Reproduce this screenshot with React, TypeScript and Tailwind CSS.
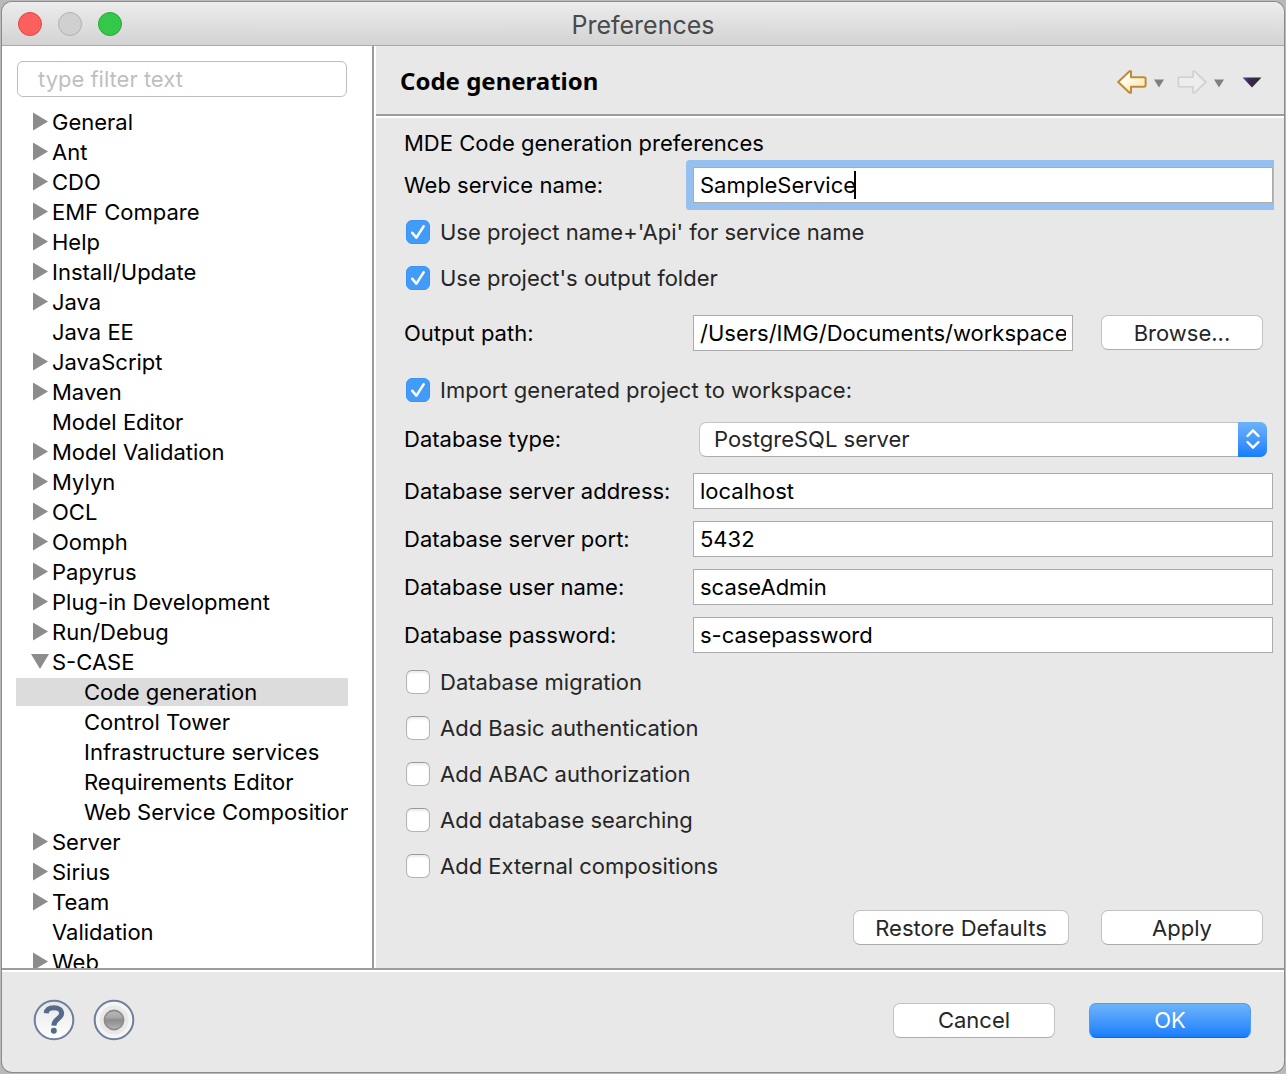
import React, { useState } from "react";

type TreeNode = { label: string; state: "closed" | "open" | "leaf"; children?: string[] };

const tree: TreeNode[] = [
  { label: "General", state: "closed" },
  { label: "Ant", state: "closed" },
  { label: "CDO", state: "closed" },
  { label: "EMF Compare", state: "closed" },
  { label: "Help", state: "closed" },
  { label: "Install/Update", state: "closed" },
  { label: "Java", state: "closed" },
  { label: "Java EE", state: "leaf" },
  { label: "JavaScript", state: "closed" },
  { label: "Maven", state: "closed" },
  { label: "Model Editor", state: "leaf" },
  { label: "Model Validation", state: "closed" },
  { label: "Mylyn", state: "closed" },
  { label: "OCL", state: "closed" },
  { label: "Oomph", state: "closed" },
  { label: "Papyrus", state: "closed" },
  { label: "Plug-in Development", state: "closed" },
  { label: "Run/Debug", state: "closed" },
  {
    label: "S-CASE",
    state: "open",
    children: [
      "Code generation",
      "Control Tower",
      "Infrastructure services",
      "Requirements Editor",
      "Web Service Composition",
    ],
  },
  { label: "Server", state: "closed" },
  { label: "Sirius", state: "closed" },
  { label: "Team", state: "closed" },
  { label: "Validation", state: "leaf" },
  { label: "Web", state: "closed" },
];

function Disclosure({ state }: { state: TreeNode["state"] }) {
  return (
    <svg className="h-[30px] w-5 shrink-0" viewBox="0 0 20 30" fill="#8c8c8c" aria-hidden="true">
      {state === "closed" && <path d="M3 5.5 L18 14.5 L3 23.5 Z" />}
      {state === "open" && <path d="M1 7 H19 L10 22 Z" />}
    </svg>
  );
}

function Tree() {
  const [selected, setSelected] = useState("Code generation");
  return (
    <ul className="min-h-0 flex-1 overflow-hidden whitespace-nowrap leading-[30px] text-black">
      {tree.map((node) => (
        <li key={node.label}>
          <button type="button" className="flex h-[30px] w-full items-center gap-[2px] pl-[14px] text-left">
            <Disclosure state={node.state} />
            {node.label}
          </button>
          {node.children && (
            <ul>
              {node.children.map((child) => (
                <li key={child} className="py-px">
                  <button
                    type="button"
                    onClick={() => setSelected(child)}
                    className={
                      child === selected
                        ? "block h-7 w-full overflow-hidden bg-[#dcdcdc] pl-[68px] text-left leading-7"
                        : "block h-7 w-full overflow-hidden pl-[68px] text-left leading-7"
                    }
                  >
                    {child}
                  </button>
                </li>
              ))}
            </ul>
          )}
        </li>
      ))}
    </ul>
  );
}

function Check({ id, label, checked = false }: { id: string; label: string; checked?: boolean }) {
  return (
    <div className="flex h-[46px] items-center gap-[10px] pl-[2px]">
      <span className="relative h-6 w-6 shrink-0">
        <input
          id={id}
          type="checkbox"
          defaultChecked={checked}
          className="peer block h-6 w-6 appearance-none rounded-[6px] border border-[#b4b4b4] border-t-[#9a9a9a] bg-white shadow-[inset_0_2px_2px_#ececec] checked:border-[#3b93f5] checked:bg-[#419bf9] checked:shadow-none"
        />
        <svg
          className="pointer-events-none absolute inset-0 hidden h-6 w-6 peer-checked:block"
          viewBox="0 0 24 24"
          fill="none"
          stroke="#fff"
          strokeWidth="2.6"
          strokeLinecap="round"
          strokeLinejoin="round"
          aria-hidden="true"
        >
          <path d="M6.3 12.8 L10.4 17.6 L17.6 6.4" />
        </svg>
      </span>
      <label htmlFor={id} className="text-[#262626]">
        {label}
      </label>
    </div>
  );
}

function Field({ id, label, value }: { id: string; label: string; value: string }) {
  return (
    <div className="flex items-center pr-px">
      <label htmlFor={id} className="w-[289px] shrink-0">
        {label}
      </label>
      <input
        id={id}
        type="text"
        defaultValue={value}
        className="h-9 min-w-0 flex-1 border border-[#ababab] bg-white px-[6px] outline-none"
      />
    </div>
  );
}

function PushButton({ label, wide = false }: { label: string; wide?: boolean }) {
  return (
    <button
      type="button"
      className={
        wide
          ? "h-[35px] w-[216px] shrink-0 rounded-[7px] border border-[#c3c3c3] border-b-[#adadad] bg-white text-[#262626]"
          : "h-[35px] w-[162px] shrink-0 rounded-[7px] border border-[#c3c3c3] border-b-[#adadad] bg-white text-[#262626]"
      }
    >
      {label}
    </button>
  );
}

function MenuTriangle() {
  return (
    <svg className="h-[9px] w-[10px]" viewBox="0 0 10 9" fill="#808080" aria-hidden="true">
      <path d="M0 0.5 H10 L5 8.5 Z" />
    </svg>
  );
}

function Toolbar() {
  return (
    <div className="flex items-center pt-[2px]">
      <button type="button" aria-label="Back">
        <svg className="h-6 w-[30px]" viewBox="0 0 30 24" aria-hidden="true">
          <defs>
            <linearGradient id="back" x1="0" y1="0" x2="1" y2="1">
              <stop offset="0.3" stopColor="#fffdf0" />
              <stop offset="1" stopColor="#fbe3a0" />
            </linearGradient>
          </defs>
          <path
            d="M1.2 12 L12.5 1.2 H14 V7.2 H27 Q28.6 7.2 28.6 9 V15 Q28.6 16.8 27 16.8 H14 V22.8 H12.5 Z"
            fill="url(#back)"
            stroke="#c08a35"
            strokeWidth="2"
            strokeLinejoin="round"
          />
        </svg>
      </button>
      <button type="button" aria-label="Back history" className="ml-[7px] pt-[2px]">
        <MenuTriangle />
      </button>
      <button type="button" aria-label="Forward" className="ml-[13px]">
        <svg className="h-6 w-[30px]" viewBox="0 0 30 24" aria-hidden="true">
          <path
            d="M28.8 12 L17.5 1.2 H16 V7.2 H2.5 Q1.4 7.2 1.4 8.5 V15.5 Q1.4 16.8 2.5 16.8 H16 V22.8 H17.5 Z"
            fill="#ededed"
            stroke="#d2d2d2"
            strokeWidth="1.8"
            strokeLinejoin="round"
          />
        </svg>
      </button>
      <button type="button" aria-label="Forward history" className="ml-[7px] pt-[2px]">
        <MenuTriangle />
      </button>
      <button type="button" aria-label="View menu" className="ml-[18px]">
        <svg className="h-[11px] w-5" viewBox="0 0 20 11" aria-hidden="true">
          <defs>
            <linearGradient id="view" x1="0" y1="0" x2="1" y2="0">
              <stop offset="0" stopColor="#6a3fc4" />
              <stop offset="0.35" stopColor="#3a2850" />
              <stop offset="1" stopColor="#2b2b2b" />
            </linearGradient>
          </defs>
          <path d="M0.5 0.5 H19.5 L10 10.5 Z" fill="url(#view)" />
        </svg>
      </button>
    </div>
  );
}

function Header() {
  return (
    <header className="flex h-[72px] shrink-0 items-center justify-between border-b-2 border-white pr-[22px] shadow-[inset_0_-2px_0_#9c9c9c]">
      <h1 className="pl-6 font-['Noto_Sans'] text-[24px] font-bold leading-8 text-black">Code generation</h1>
      <Toolbar />
    </header>
  );
}

function Settings() {
  return (
    <form className="mr-[10px] flex flex-col overflow-hidden pl-7" onSubmit={(e) => e.preventDefault()}>
      <p className="flex h-[49px] items-center">MDE Code generation preferences</p>

      <div className="flex items-center pr-px">
        <label htmlFor="service" className="w-[289px] shrink-0">
          Web service name:
        </label>
        <div className="relative flex min-w-0 flex-1 rounded-[1px] shadow-[0_0_0_7px_#96c0f0]">
          <input
            id="service"
            type="text"
            defaultValue="SampleService"
            className="h-9 min-w-0 flex-1 border border-[#ababab] bg-white px-[6px] caret-transparent outline-none"
          />
          <span className="absolute left-[161px] top-1 h-7 w-[2px] bg-black" />
        </div>
      </div>

      <div className="pb-[14px] pt-[6px]">
        <Check id="api" label="Use project name+'Api' for service name" checked />
        <Check id="folder" label="Use project's output folder" checked />
      </div>

      <div className="flex items-start pr-[11px]">
        <label htmlFor="path" className="w-[289px] shrink-0 leading-9">
          Output path:
        </label>
        <input
          id="path"
          type="text"
          defaultValue="/Users/IMG/Documents/workspace"
          className="mr-7 h-9 min-w-0 flex-1 border border-[#ababab] bg-white px-[6px] outline-none"
        />
        <PushButton label="Browse..." />
      </div>

      <div className="pb-2 pt-4">
        <Check id="import" label="Import generated project to workspace:" checked />
      </div>

      <div className="flex items-center pr-[7px]">
        <label htmlFor="dbtype" className="w-[295px] shrink-0 leading-9">
          Database type:
        </label>
        <div className="relative min-w-0 flex-1">
          <select
            id="dbtype"
            className="block h-[35px] w-full appearance-none rounded-[7px] border border-[#c3c3c3] border-b-[#adadad] bg-white px-[14px] text-[#262626] outline-none"
          >
            <option>PostgreSQL server</option>
          </select>
          <span className="pointer-events-none absolute inset-y-0 right-0 flex w-[29px] items-center justify-center rounded-r-[7px] bg-linear-to-b from-[#6cb3fa] to-[#157dfb]">
            <svg
              className="h-[22px] w-4"
              viewBox="0 0 16 22"
              fill="none"
              stroke="#fff"
              strokeWidth="2.4"
              strokeLinecap="round"
              strokeLinejoin="round"
              aria-hidden="true"
            >
              <path d="M2.5 8 L8 2.3 L13.5 8 M2.5 14 L8 19.7 L13.5 14" />
            </svg>
          </span>
        </div>
      </div>

      <div className="flex flex-col gap-3 pb-[6px] pt-4">
        <Field id="address" label="Database server address:" value="localhost" />
        <Field id="port" label="Database server port:" value="5432" />
        <Field id="user" label="Database user name:" value="scaseAdmin" />
        <Field id="password" label="Database password:" value="s-casepassword" />
      </div>

      <Check id="migration" label="Database migration" />
      <Check id="basic" label="Add Basic authentication" />
      <Check id="abac" label="Add ABAC authorization" />
      <Check id="search" label="Add database searching" />
      <Check id="external" label="Add External compositions" />

      <div className="flex justify-end gap-8 pr-[11px] pt-[21px]">
        <PushButton label="Restore Defaults" wide />
        <PushButton label="Apply" />
      </div>
    </form>
  );
}

function HelpIcon() {
  return (
    <svg className="h-[42px] w-[42px]" viewBox="0 0 42 42" aria-hidden="true">
      <defs>
        <linearGradient id="disc" x1="0" y1="0" x2="0" y2="1">
          <stop offset="0" stopColor="#e6e6e8" />
          <stop offset="1" stopColor="#ffffff" />
        </linearGradient>
      </defs>
      <circle cx="21" cy="21" r="19.3" fill="url(#disc)" stroke="#6e7f9b" strokeWidth="2" />
      <path
        d="M13.2 14.2 C13.6 10.2 17.3 8.8 21 8.8 C25.5 8.8 28.6 11 28.6 14.6 C28.6 19.6 21 19.4 20.8 26.6"
        fill="none"
        stroke="#566b8c"
        strokeWidth="5"
      />
      <circle cx="20.8" cy="31.8" r="3" fill="#566b8c" />
    </svg>
  );
}

function RecordIcon() {
  return (
    <svg className="h-[42px] w-[42px]" viewBox="0 0 42 42" aria-hidden="true">
      <defs>
        <linearGradient id="record" x1="0" y1="0" x2="0" y2="1">
          <stop offset="0" stopColor="#b8b8b8" />
          <stop offset="0.35" stopColor="#aaaaaa" />
          <stop offset="0.5" stopColor="#8c8c8c" />
          <stop offset="1" stopColor="#b4b4b4" />
        </linearGradient>
      </defs>
      <circle cx="21" cy="21" r="19.3" fill="#f4f4f4" stroke="#6e7f9b" strokeWidth="2" />
      <circle cx="21" cy="21" r="14.5" fill="#e8e8e8" />
      <circle cx="21" cy="21" r="9.6" fill="url(#record)" stroke="#8a8a8a" strokeWidth="1.6" />
    </svg>
  );
}

export default function App() {
  return (
    <div className="h-screen bg-[#b9b9b9] p-[2px] font-['Inter',sans-serif] text-[22px] leading-7 text-black">
      <div className="flex h-full flex-col overflow-hidden rounded-[10px] bg-[#e8e8e8] shadow-[0_0_0_1px_#8c8c8c]">
        <div className="grid h-11 shrink-0 grid-cols-[1fr_auto_1fr] items-center border-b border-[#a9a9a9] bg-linear-to-b from-[#ececec] to-[#d3d3d3] px-4 pt-px">
          <div className="flex gap-4">
            <button type="button" aria-label="Close" className="h-6 w-6 rounded-full border border-[#e2453f] bg-[#fc605c]" />
            <button type="button" aria-label="Minimize" className="h-6 w-6 rounded-full border border-[#b0b0b0] bg-[#d0d0d0]" />
            <button type="button" aria-label="Zoom" className="h-6 w-6 rounded-full border border-[#26a934] bg-[#34c84a]" />
          </div>
          <div className="pt-[2px] text-[25px] leading-8 text-[#4a4a4a]">Preferences</div>
        </div>

        <div className="flex min-h-0 flex-1">
          <aside className="flex w-[372px] shrink-0 flex-col border-r-2 border-[#9c9c9c] bg-white pl-[14px] pr-6">
            <input
              type="text"
              aria-label="Filter"
              placeholder="type filter text"
              className="mx-px mb-[10px] mt-[15px] h-9 shrink-0 rounded-[6px] border border-[#bdbdbd] bg-white px-5 outline-none placeholder:text-[#bfbfbf]"
            />
            <Tree />
          </aside>
          <main className="flex min-w-0 flex-1 flex-col border-l-2 border-white">
            <Header />
            <Settings />
          </main>
        </div>

        <footer className="flex h-[104px] shrink-0 items-center justify-between border-t-2 border-[#9c9c9c] pb-[2px] pl-[31px] pr-[33px] shadow-[inset_0_2px_0_#fff]">
          <div className="flex gap-[18px]">
            <button type="button" aria-label="Help">
              <HelpIcon />
            </button>
            <button type="button" aria-label="Record">
              <RecordIcon />
            </button>
          </div>
          <div className="flex gap-[34px]">
            <PushButton label="Cancel" />
            <button
              type="button"
              className="h-[35px] w-[162px] rounded-[7px] border border-[#4a9ff5] border-b-[#0f62e8] bg-linear-to-b from-[#6cb3fa] to-[#157dfb] text-white"
            >
              OK
            </button>
          </div>
        </footer>
      </div>
    </div>
  );
}
